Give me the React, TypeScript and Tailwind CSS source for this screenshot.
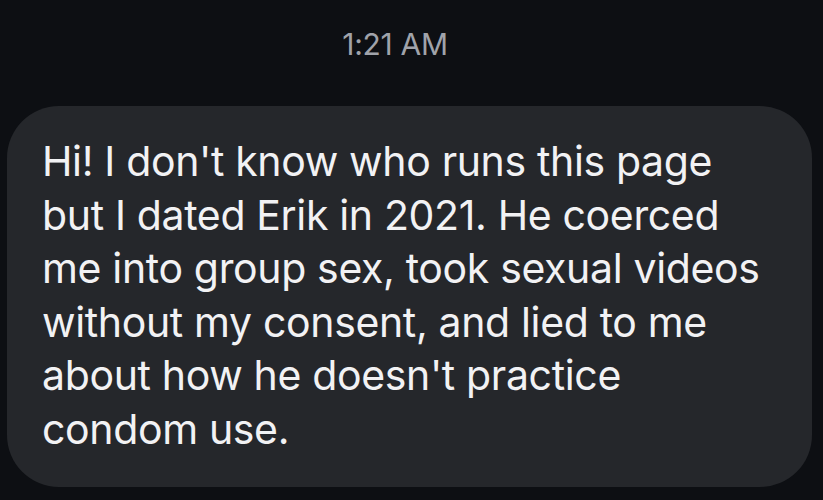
import React from "react";

const lines = [
  "Hi! I don't know who runs this page",
  "but I dated Erik in 2021. He coerced",
  "me into group sex, took sexual videos",
  "without my consent, and lied to me",
  "about how he doesn't practice",
  "condom use.",
];

export default function App() {
  return (
    <div
      className="w-[823px] h-[500px] bg-[#0d0f13] flex flex-col overflow-hidden"
      style={{ fontFamily: "Inter, 'Noto Sans', sans-serif" }}
    >
      {/* Timestamp */}
      <div className="pt-[26px] h-[106px] text-center text-[30px] leading-[36px] text-[#a0a3aa] tracking-[-0.3px] pr-[33px]">
        1:21 AM
      </div>
      {/* Message bubble */}
      <div className="ml-[7px] w-[805px] h-[381px] bg-[#25272b] rounded-[52px] pl-[35px] pt-[29px]">
        {lines.map((l) => (
          <div key={l} className="text-[41px] leading-[53.5px] text-[#f2f2f4] whitespace-nowrap tracking-[-0.35px]">
            {l}
          </div>
        ))}
      </div>
    </div>
  );
}
